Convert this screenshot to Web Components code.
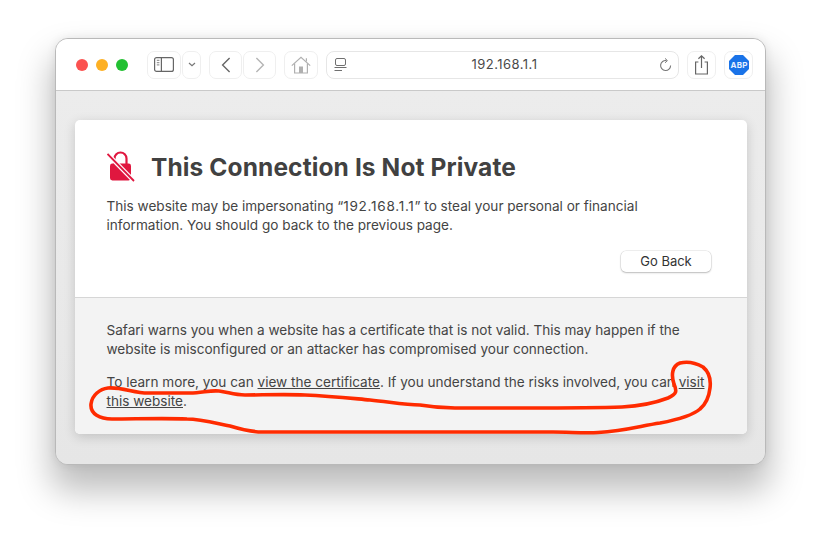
<!DOCTYPE html>
<html lang="en"><head><meta charset="utf-8"><title>This Connection Is Not Private</title>
<style>
html,body{margin:0;padding:0;background:#fff;height:538px;overflow:hidden;font-family:Inter,"Liberation Sans",sans-serif}
</style></head><body>
<safari-window>
  <safari-toolbar slot="toolbar"></safari-toolbar>
  <error-card></error-card>
</safari-window>
<red-scribble></red-scribble>
<script>
function def(name, html){
  customElements.define(name, class extends HTMLElement{
    constructor(){super();this.attachShadow({mode:'open'}).innerHTML=html;}
  });
}
def('safari-window',`<style>
:host{display:flex;flex-direction:column;box-sizing:border-box;width:711px;height:427px;margin:38px 0 0 55px;border:1px solid #b9b9b9;border-radius:13px;background:#e9e9e9;box-shadow:0 22px 34px 4px rgba(0,0,0,.26),0 0 10px rgba(0,0,0,.08);overflow:hidden}
.content{flex:1;display:flex;flex-direction:column;padding:29px 18px 30px 19px;background:linear-gradient(#ececec,#e6e6e6)}
</style><slot name="toolbar"></slot><div class="content"><slot></slot></div>`);

def('tool-btn',`<style>
:host{display:flex;align-items:center;justify-content:center;box-sizing:border-box;height:28px;border:1px solid #efefef;border-radius:7px;background:#fff;flex:none}
</style><slot></slot>`);

def('traffic-lights',`<style>
:host{display:flex;gap:8px;flex:none}
i{width:12px;height:12px;border-radius:50%;display:block}
</style><i style="background:#fb5250"></i><i style="background:#fdb024"></i><i style="background:#22c032"></i>`);

def('url-bar',`<style>
:host{flex:none;display:block;position:relative;box-sizing:border-box;width:353px;height:28px;border:1px solid #e6e6e6;border-radius:8px;background:#fff;font:13px/25px Inter,"Liberation Sans",sans-serif;letter-spacing:.45px;text-indent:4px;color:#4a4a4a;text-align:center}
svg{position:absolute;top:50%;transform:translateY(-50%)}
.r{right:6px}.l{left:7px}
</style><svg class="l" width="13" height="14" viewBox="0 0 13 14" fill="none" stroke="#707070" stroke-width="1"><rect x="1.5" y=".5" width="10" height="7" rx="1.5"/><path d="M.5 9.5h12M.5 12.5h7.5"/></svg>192.168.1.1<svg class="r" width="13" height="14" viewBox="0 0 13 14" fill="none" stroke="#777" stroke-width="1.1"><path d="M7.5 2.6A5 5 0 1 0 11.6 7.5"/><path d="M6 .4l2.4 2.2L6 4.8" stroke-width="1"/></svg>`);

def('safari-toolbar',`<style>
:host{display:flex;align-items:center;box-sizing:border-box;height:52px;flex:none;background:#fff;border-bottom:1px solid #c9c9c9;padding:0 0 0 20px}
traffic-lights{margin-right:19px}
.g{display:flex;flex:none;align-items:center}
</style>
<traffic-lights></traffic-lights>
<div class="g" style="gap:1px;margin-right:8px">
  <tool-btn style="width:34px"><svg width="20" height="15" viewBox="0 0 20 15" fill="none" stroke="#666" stroke-width="1.2"><rect x=".6" y=".6" width="18.8" height="13.8" rx="2"/><path d="M7.4.6v13.8" /><path d="M2.8 3.4h2.6M2.8 5.6h2.6M2.8 7.8h2.6" stroke="#999"/></svg></tool-btn>
  <tool-btn style="width:19px"><svg width="8" height="5" viewBox="0 0 8 5" fill="none" stroke="#777" stroke-width="1.2"><path d="M1 1l3 2.6L7 1"/></svg></tool-btn>
</div>
<div class="g" style="gap:1px;margin-right:8px">
  <tool-btn style="width:33px"><svg width="10" height="16" viewBox="0 0 10 16" fill="none" stroke="#666" stroke-width="1.4"><path d="M8.6 1L1.6 8l7 7"/></svg></tool-btn>
  <tool-btn style="width:33px"><svg width="10" height="16" viewBox="0 0 10 16" fill="none" stroke="#b5b5b5" stroke-width="1.4"><path d="M1.4 1l7 7-7 7"/></svg></tool-btn>
</div>
<tool-btn style="width:34px;margin-right:8px"><svg width="20" height="18" viewBox="0 0 20 18" fill="none" stroke="#b0b0b0" stroke-width="1.2"><path d="M.8 9.6L10 1.2l9.2 8.4"/><path d="M3.6 7.6v9.4h12.8V7.6"/><path d="M15.4 2.2v3.4"/><rect x="8" y="10.5" width="4" height="6.5" fill="#b0b0b0" stroke="none"/></svg></tool-btn>
<url-bar style="margin-right:8px"></url-bar>
<tool-btn style="width:29px;margin-right:8px"><svg width="15" height="20" viewBox="0 0 15 20" fill="none" stroke="#666" stroke-width="1.2"><path d="M4.4 7H1.6v12h11.8V7h-2.8"/><path d="M7.5 13V1M4.4 3.8L7.5 .9l3.1 2.9"/></svg></tool-btn>
<tool-btn style="width:29px"><svg width="20" height="20" viewBox="0 0 20 20"><polygon points="6,0 14,0 20,6 20,14 14,20 6,20 0,14 0,6" fill="#1a73e8"/><text x="10" y="13" text-anchor="middle" font-family="Inter,'Liberation Sans',sans-serif" font-size="8" font-weight="700" fill="#e8f0ff" letter-spacing=".2">ABP</text></svg></tool-btn>`);

def('lock-icon',`<style>:host{display:block;flex:none;width:28px;height:32px}svg{display:block}</style>
<svg width="28" height="32" viewBox="0 0 28 32"><path d="M7.5 14V7.5a6 6 0 0 1 12 0V14" fill="none" stroke="#e0173f" stroke-width="2.2"/><rect x="3" y="12.5" width="21" height="17" rx="2.4" fill="#e0173f"/><path d="M.5 3L27 30" stroke="#fff" stroke-width="4.4"/><path d="M.5 3L27 30" stroke="#e0173f" stroke-width="1.8"/></svg>`);

def('error-card',`<style>
:host{display:flex;flex-direction:column;flex:1;border-radius:5px;overflow:hidden;background:#fff;box-shadow:0 3px 12px rgba(0,0,0,.16);color:#444;font:13.6px/19px Inter,"Liberation Sans",sans-serif;letter-spacing:-.01px}
.top{height:178px;box-sizing:border-box;padding:31px 35px 0 31.5px;display:flex;flex-direction:column;border-bottom:1px solid #d6d6d6;flex:none}
.head{display:flex;align-items:center;gap:16px;margin-bottom:14px}
lock-icon{margin-left:.5px}
h1{margin:0;font-size:24.5px;line-height:32px;letter-spacing:.11px;font-weight:700;color:#414141;white-space:nowrap}
p{margin:0}
.n{letter-spacing:.7px}
.bottom{flex:1;background:#f3f3f3;padding:23px 30px 0 31.5px}
.bottom p+p{margin-top:14px}
a{color:inherit;text-decoration:underline}
button{align-self:flex-end;margin:16px 1px 0 0;width:90px;height:21px;padding:0 0 1px;background:#fff;border:0;border-radius:5px;box-shadow:0 0 0 .5px rgba(0,0,0,.12),0 1px 2px rgba(0,0,0,.22);font:13px Inter,"Liberation Sans",sans-serif;color:#333}
</style>
<div class="top">
  <div class="head"><lock-icon></lock-icon><h1>This Connection Is Not Private</h1></div>
  <p>This website may be impersonating “<span class="n">192.168.1.1</span>” to steal your personal or financial<br>information. You should go back to the previous page.</p>
  <button>Go Back</button>
</div>
<div class="bottom">
  <p>Safari warns you when a website has a certificate that is not valid. This may happen if the<br>website is misconfigured or an attacker has compromised your connection.</p>
  <p>To learn more, you can <a>view the certificate</a>. If you understand the risks involved, you can <a>visit<br>this website</a>.</p>
</div>`);

def('red-scribble',`<style>:host{display:block;position:absolute;left:0;top:0;width:821px;height:538px;pointer-events:none}svg{display:block}</style>
<svg width="821" height="538" viewBox="0 0 821 538" fill="none" stroke="#ff2b00" stroke-width="3.6" stroke-linecap="round" stroke-linejoin="round"><path d="M91 404C92 395 100 389 108 388C122 387 134 393 148 393C165 393 176 393 190 393C202 393 210 390 219 391C228 392 234 395 245 395C262 395 285 394 305 395C330 396 348 398 370 400C390 402 405 405 420 405C432 407 440 408 455 408C480 408 500 408 525 408C560 408 595 408 622 407C640 406 655 403 668 398C677 394 677 391 674 384C671 375 672 366 680 363C688 361 696 363 703 367C709 372 711 380 710 388C709 397 706 404 700 409C692 416 676 420 660 423C640 426 625 431 598 432.5C585 433.5 570 432 553 432C500 432 460 432 420 432C380 432 320 432 262 432C250 432 240 429 230 426C215 423 200 419 187 419C165 418 135 419 112 419C100 419 90 414 91 404Z"/></svg>`);
</script>
</body></html>
